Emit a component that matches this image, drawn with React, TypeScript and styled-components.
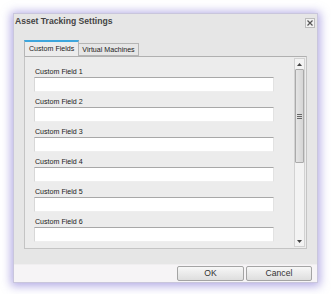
import React from 'react';
import styled, { createGlobalStyle } from 'styled-components';

const GlobalStyle = createGlobalStyle`
    html, body {
        margin: 0;
        padding: 0;
        background: #ffffff;
    }
    * {
        box-sizing: border-box;
    }
`;

const Page = styled.div`
    width: 331px;
    height: 294px;
    padding: 13px 0 0 13px;
    font-family: 'Liberation Sans', Arial, sans-serif;
`;

const Dialog = styled.div`
    width: 305px;
    height: 270px;
    display: flex;
    flex-direction: column;
    background: #e6e6e6;
    border: 1px solid #c9c6dc;
    box-shadow: 0 1px 9px 2px rgba(115, 100, 205, 0.55);
`;

const TitleBar = styled.div`
    height: 16px;
    display: flex;
    align-items: center;
    justify-content: space-between;
    padding: 0 2px 0 1px;
`;

const Title = styled.div`
    font-weight: bold;
    font-size: 8.6px;
    color: #444;
`;

const CloseButton = styled.div`
    width: 10px;
    height: 10px;
    margin-top: 4px;
    border: 1px solid #bcbcbc;
    background: #f2f2f2;
    display: flex;
    align-items: center;
    justify-content: center;
`;

const Body = styled.div`
    flex: 1;
    padding: 12px 10px 15px 10px;
    display: flex;
    flex-direction: column;
`;

const TabRow = styled.div`
    display: flex;
    align-items: flex-end;
    height: 16px;
`;

const Tab = styled.div<{ $active?: boolean }>`
    height: ${(p) => (p.$active ? '16px' : '13px')};
    padding: 0 ${(p) => (p.$active ? '4px' : '3px')};
    display: flex;
    align-items: center;
    font-size: 7.1px;
    color: #222;
    background: ${(p) => (p.$active ? '#ececec' : '#e6e6e6')};
    border: 1px solid #b5b5b5;
    border-bottom: ${(p) => (p.$active ? 'none' : '1px solid #b5b5b5')};
    border-top: ${(p) => (p.$active ? '2px solid #3da6dd' : '1px solid #b5b5b5')};
    border-left: ${(p) => (p.$active ? '1px solid #b5b5b5' : 'none')};
`;

const Panel = styled.div`
    flex: 1;
    display: flex;
    background: #ececec;
    border: 1px solid #c4c4c4;
    border-top-color: #b0b0b0;
    padding: 1px 1px 1px 9px;
    overflow: hidden;
`;

const FieldList = styled.div`
    flex: 1;
    padding-top: 9px;
    overflow: hidden;
`;

const Field = styled.div`
    width: 240px;
    margin-bottom: 5px;
`;

const Label = styled.div`
    height: 10px;
    line-height: 10px;
    font-size: 7.1px;
    color: #222;
    padding-left: 1px;
`;

const Input = styled.div`
    height: 15px;
    background: #ffffff;
    border-top: 1px solid #a8a8a8;
    border-left: 1px solid #d8d8d8;
    border-right: 1px solid #e2e2e2;
    border-bottom: 1px solid #eeeeee;
`;

const Scrollbar = styled.div`
    width: 11px;
    display: flex;
    flex-direction: column;
    background: #f3f3f3;
    border: 1px solid #d2d2d2;
`;

const Arrow = styled.div`
    height: 10px;
    display: flex;
    align-items: center;
    justify-content: center;
`;

const Track = styled.div`
    flex: 1;
    display: flex;
    flex-direction: column;
`;

const Thumb = styled.div`
    height: 94px;
    background: linear-gradient(to right, #e4e4e4, #d6d6d6);
    border: 1px solid #aaaaaa;
    border-radius: 1px;
    display: flex;
    align-items: center;
    justify-content: center;
`;

const Footer = styled.div`
    height: 25px;
    background: #f6f4f6;
    border-top: 1px solid #f0eef0;
    display: flex;
    align-items: center;
    justify-content: flex-end;
    gap: 2px;
    padding: 0 5px 1px 0;
`;

const Button = styled.div<{ $width: number }>`
    width: ${(p) => p.$width}px;
    height: 15px;
    display: flex;
    align-items: center;
    justify-content: center;
    font-size: 8.6px;
    color: #333;
    background: linear-gradient(to bottom, #f7f7f7, #dedede);
    border: 1px solid #a4a4a4;
    border-radius: 2px;
`;

const fields = [1, 2, 3, 4, 5, 6];

const App: React.FC = (): JSX.Element => {
    return (
        <Page>
            <GlobalStyle />
            <Dialog>
                <TitleBar>
                    <Title>Asset Tracking Settings</Title>
                    <CloseButton>
                        <svg width="6" height="6" viewBox="0 0 6 6">
                            <path d="M0.5 0.5 L5.5 5.5 M5.5 0.5 L0.5 5.5" stroke="#555" strokeWidth="1.2" />
                        </svg>
                    </CloseButton>
                </TitleBar>
                <Body>
                    <TabRow>
                        <Tab $active>Custom Fields</Tab>
                        <Tab>Virtual Machines</Tab>
                    </TabRow>
                    <Panel>
                        <FieldList>
                            {fields.map((n) => (
                                <Field key={n}>
                                    <Label>Custom Field {n}</Label>
                                    <Input />
                                </Field>
                            ))}
                        </FieldList>
                        <Scrollbar>
                            <Arrow>
                                <svg width="5" height="3" viewBox="0 0 5 3">
                                    <path d="M0 3 L2.5 0 L5 3 Z" fill="#444" />
                                </svg>
                            </Arrow>
                            <Track>
                                <Thumb>
                                    <svg width="5" height="5" viewBox="0 0 5 5">
                                        <path d="M0 0.5 H5 M0 2.5 H5 M0 4.5 H5" stroke="#666" strokeWidth="1" />
                                    </svg>
                                </Thumb>
                            </Track>
                            <Arrow>
                                <svg width="5" height="3" viewBox="0 0 5 3">
                                    <path d="M0 0 L2.5 3 L5 0 Z" fill="#444" />
                                </svg>
                            </Arrow>
                        </Scrollbar>
                    </Panel>
                </Body>
                <Footer>
                    <Button $width={67}>OK</Button>
                    <Button $width={66}>Cancel</Button>
                </Footer>
            </Dialog>
        </Page>
    );
};

export default App;
